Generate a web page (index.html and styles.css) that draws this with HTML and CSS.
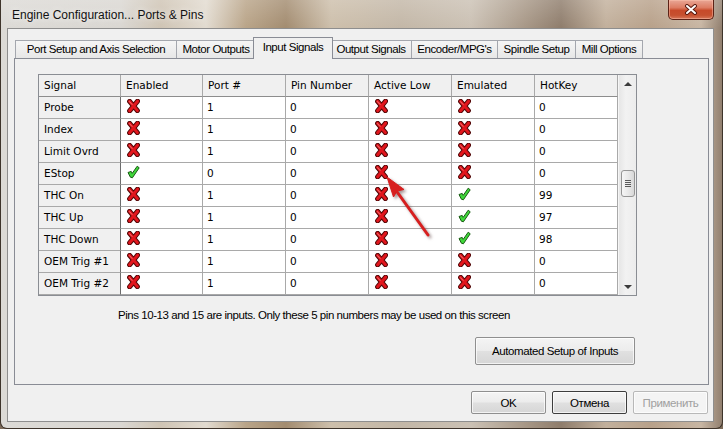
FILE: index.html
```html
<!DOCTYPE html>
<html>
<head>
<meta charset="utf-8">
<title>Engine Configuration... Ports &amp; Pins</title>
<link rel="stylesheet" href="styles.css">
</head>
<body>
<svg class="defs" width="0" height="0" aria-hidden="true">
  <defs>
    <symbol id="ico-x" viewBox="0 0 13 14">
      <path d="M2.6 2.4 L10.4 11.6 M10.6 2.2 L2.6 11.8" stroke="#520808" stroke-width="5" stroke-linecap="round" fill="none"/>
      <path d="M2.6 2.4 L10.4 11.6 M10.6 2.2 L2.6 11.8" stroke="#e2161d" stroke-width="3" stroke-linecap="round" fill="none"/>
      <path d="M2.4 2.6 L5 5.4" stroke="#f57a7a" stroke-width="1" stroke-linecap="round" fill="none"/>
    </symbol>
    <symbol id="ico-ok" viewBox="0 0 13 14">
      <path d="M1 7.5 L4.2 6.4 L5.2 8.4 L10.2 1.2 L12.2 2.8 L5.4 12.8 L3.4 12.2 Z" fill="#3fd83a" stroke="#185a12" stroke-width="1" stroke-linejoin="round"/>
    </symbol>
  </defs>
</svg>

<div class="window">
  <div class="titlebar">
    <span class="title">Engine Configuration... Ports &amp; Pins</span>
    <div class="close-btn">
      <svg width="14" height="11" viewBox="0 0 14 11"><path d="M3 2 L11 9 M11 2 L3 9" stroke="#5a1a10" stroke-width="4" stroke-linecap="round"/><path d="M3 2 L11 9 M11 2 L3 9" stroke="#ffffff" stroke-width="2" stroke-linecap="round"/></svg>
    </div>
  </div>

  <div class="client">
    <div class="tabs">
      <div class="tab tab-port">Port Setup and Axis Selection</div>
      <div class="tab tab-motor">Motor Outputs</div>
      <div class="tab tab-input active">Input Signals</div>
      <div class="tab tab-output">Output Signals</div>
      <div class="tab tab-enc">Encoder/MPG's</div>
      <div class="tab tab-spindle">Spindle Setup</div>
      <div class="tab tab-mill">Mill Options</div>
    </div>

    <div class="panel">
      <div class="grid-wrap">
        <div class="grid">
          <div class="cell head">Signal</div><div class="cell head">Enabled</div><div class="cell head">Port #</div><div class="cell head">Pin Number</div><div class="cell head">Active Low</div><div class="cell head">Emulated</div><div class="cell head">HotKey</div>

          <div class="cell rowhead">Probe</div><div class="cell icon"><svg class="ico"><use href="#ico-x"/></svg></div><div class="cell">1</div><div class="cell">0</div><div class="cell icon"><svg class="ico"><use href="#ico-x"/></svg></div><div class="cell icon"><svg class="ico"><use href="#ico-x"/></svg></div><div class="cell">0</div>

          <div class="cell rowhead">Index</div><div class="cell icon"><svg class="ico"><use href="#ico-x"/></svg></div><div class="cell">1</div><div class="cell">0</div><div class="cell icon"><svg class="ico"><use href="#ico-x"/></svg></div><div class="cell icon"><svg class="ico"><use href="#ico-x"/></svg></div><div class="cell">0</div>

          <div class="cell rowhead">Limit Ovrd</div><div class="cell icon"><svg class="ico"><use href="#ico-x"/></svg></div><div class="cell">1</div><div class="cell">0</div><div class="cell icon"><svg class="ico"><use href="#ico-x"/></svg></div><div class="cell icon"><svg class="ico"><use href="#ico-x"/></svg></div><div class="cell">0</div>

          <div class="cell rowhead">EStop</div><div class="cell icon"><svg class="ico"><use href="#ico-ok"/></svg></div><div class="cell">0</div><div class="cell">0</div><div class="cell icon"><svg class="ico"><use href="#ico-x"/></svg></div><div class="cell icon"><svg class="ico"><use href="#ico-x"/></svg></div><div class="cell">0</div>

          <div class="cell rowhead">THC On</div><div class="cell icon"><svg class="ico"><use href="#ico-x"/></svg></div><div class="cell">1</div><div class="cell">0</div><div class="cell icon"><svg class="ico"><use href="#ico-x"/></svg></div><div class="cell icon"><svg class="ico"><use href="#ico-ok"/></svg></div><div class="cell">99</div>

          <div class="cell rowhead">THC Up</div><div class="cell icon"><svg class="ico"><use href="#ico-x"/></svg></div><div class="cell">1</div><div class="cell">0</div><div class="cell icon"><svg class="ico"><use href="#ico-x"/></svg></div><div class="cell icon"><svg class="ico"><use href="#ico-ok"/></svg></div><div class="cell">97</div>

          <div class="cell rowhead">THC Down</div><div class="cell icon"><svg class="ico"><use href="#ico-x"/></svg></div><div class="cell">1</div><div class="cell">0</div><div class="cell icon"><svg class="ico"><use href="#ico-x"/></svg></div><div class="cell icon"><svg class="ico"><use href="#ico-ok"/></svg></div><div class="cell">98</div>

          <div class="cell rowhead">OEM Trig #1</div><div class="cell icon"><svg class="ico"><use href="#ico-x"/></svg></div><div class="cell">1</div><div class="cell">0</div><div class="cell icon"><svg class="ico"><use href="#ico-x"/></svg></div><div class="cell icon"><svg class="ico"><use href="#ico-x"/></svg></div><div class="cell">0</div>

          <div class="cell rowhead">OEM Trig #2</div><div class="cell icon"><svg class="ico"><use href="#ico-x"/></svg></div><div class="cell">1</div><div class="cell">0</div><div class="cell icon"><svg class="ico"><use href="#ico-x"/></svg></div><div class="cell icon"><svg class="ico"><use href="#ico-x"/></svg></div><div class="cell">0</div>
        </div>

        <div class="vscroll">
          <div class="sb-btn"><span class="tri-up"></span></div>
          <div class="sb-track">
            <div class="sb-thumb"><span class="grip"></span><span class="grip"></span><span class="grip"></span><span class="grip"></span></div>
          </div>
          <div class="sb-btn"><span class="tri-down"></span></div>
        </div>

        <svg class="arrow" width="597" height="220" viewBox="0 0 597 220">
          <path d="M389 160 L356 114" stroke="#d71f1f" stroke-width="3" stroke-linecap="round" fill="none"/>
          <path d="M348 102 L365 114.5 L358 116 L354.5 122 Z" fill="#d71f1f" stroke="#d71f1f" stroke-width="1" stroke-linejoin="round"/>
        </svg>
      </div>

      <p class="note">Pins 10-13 and 15 are inputs. Only these 5 pin numbers may be used on this screen</p>

      <div class="auto-row">
        <button class="btn btn-auto">Automated Setup of Inputs</button>
      </div>
    </div>

    <div class="buttons">
      <button class="btn">OK</button>
      <button class="btn btn-default">Отмена</button>
      <button class="btn btn-disabled">Применить</button>
    </div>
  </div>
</div>
</body>
</html>
```

FILE: styles.css
```css
* { box-sizing: border-box; }

html, body {
  margin: 0;
  padding: 0;
}

body {
  width: 723px;
  height: 429px;
  overflow: hidden;
  background: #7d6b5a;
  font-family: "Liberation Sans", Arial, sans-serif;
}

.defs {
  position: absolute;
  width: 0;
  height: 0;
  overflow: hidden;
}

/* ---------- window frame ---------- */
.window {
  width: 723px;
  height: 429px;
  display: flex;
  flex-direction: column;
  padding: 0 8px 6px 6px;
  border-left: 1px solid #3e342b;
  border-right: 1px solid #3e342b;
  border-bottom: 1px solid #3e342b;
  border-radius: 0 0 7px 7px;
  background:
    linear-gradient(180deg, rgba(255,255,255,0.18) 0px, rgba(255,255,255,0) 28px),
    linear-gradient(90deg,
      #dcdad6 0px, #dad7d2 120px, #cfc4b4 160px, #e2dbd0 205px,
      #b9a488 245px, #a38c70 285px, #cdbfab 330px, #c3b7a7 400px,
      #cbc1b4 470px, #a79786 525px, #8f7d6c 560px, #c2b09c 605px,
      #b8a18a 650px, #c8b6a3 700px, #8c7a6a 723px);
}

.titlebar {
  height: 28px;
  flex: none;
  display: flex;
  align-items: flex-start;
  justify-content: space-between;
  padding-left: 5px;
}

.title {
  font-family: "Liberation Sans", Arial, sans-serif;
  font-size: 12px;
  line-height: 14px;
  margin-top: 8px;
  color: #111;
  text-shadow: 0 0 6px rgba(255,255,255,0.9);
}

.close-btn {
  width: 46px;
  height: 20px;
  display: flex;
  align-items: center;
  justify-content: center;
  border: 1px solid #5c2216;
  border-top: none;
  border-radius: 0 0 5px 5px;
  background: linear-gradient(180deg, #e9a796 0%, #dd7c63 40%, #c74a2a 55%, #c6502f 80%, #d7785a 100%);
  box-shadow: inset 0 0 0 1px rgba(255,200,180,0.45);
}

/* ---------- client area ---------- */
.client {
  flex: 1;
  display: flex;
  flex-direction: column;
  background: #f0f0f0;
  border: 1px solid #8e8e8e;
}

.tabs {
  height: 30px;
  flex: none;
  display: flex;
  align-items: flex-end;
  padding: 8px 0 0 7px;
}

.tab {
  height: 19px;
  margin-left: -1px;
  border: 1px solid #a4a7ae;
  border-bottom: none;
  background: linear-gradient(180deg, #f5f5f5 0%, #eeeeee 50%, #e6e6e6 100%);
  font-family: "Liberation Sans", Arial, sans-serif;
  font-size: 11.5px;
  letter-spacing: -0.45px;
  line-height: 17px;
  color: #000;
  text-align: center;
  white-space: nowrap;
}

.tab-port { width: 162px; margin-left: 0; }
.tab-motor { width: 80px; }
.tab-input { width: 80px; }
.tab-output { width: 82px; margin-left: -3px; }
.tab-enc { width: 87px; }
.tab-spindle { width: 79px; }
.tab-mill { width: 68px; }

.tab.active {
  height: 22px;
  margin-left: -3px;
  position: relative;
  z-index: 1;
  background: #f0f0f0;
  border-color: #898c95;
  line-height: 19px;
}

.panel {
  margin: -1px 0 0 6px;
  width: 695px;
  height: 327px;
  flex: none;
  border: 1px solid #898c95;
  background: #f0f0f0;
  display: flex;
  flex-direction: column;
}

/* ---------- data grid ---------- */
.grid-wrap {
  position: relative;
  margin: 15px 0 0 23px;
  width: 599px;
  height: 222px;
  display: flex;
  border: 1px solid #8a8d93;
  background: #f0f0f0;
}

.grid {
  width: 579px;
  display: grid;
  grid-template-columns: 82px 82px 83px 83px 83px 83px 83px;
  grid-auto-rows: 22px;
  align-content: start;
}

.cell {
  border-right: 1px solid #a9a9a9;
  border-bottom: 1px solid #a9a9a9;
  padding-left: 4px;
  background: #ffffff;
  font-family: "DejaVu Sans", Verdana, sans-serif;
  font-size: 10.5px;
  line-height: 21px;
  color: #000;
  white-space: nowrap;
  overflow: hidden;
}

.cell.head {
  background: #f0f0f0;
  border-bottom-color: #8d8d8d;
  padding-left: 5px;
}

.cell.rowhead {
  background: #f0f0f0;
  border-right-color: #6c6c6c;
  padding-left: 5px;
}

.cell.icon {
  padding: 2px 0 0 6px;
  line-height: 0;
}

.ico {
  width: 13px;
  height: 14px;
}

/* ---------- scrollbar ---------- */
.vscroll {
  width: 18px;
  display: flex;
  flex-direction: column;
  background: linear-gradient(90deg, #e6e6e6, #f2f2f2 40%, #ececec);
  border-left: 1px solid #f6f6f6;
}

.sb-btn {
  height: 17px;
  flex: none;
  display: flex;
  align-items: center;
  justify-content: center;
}

.tri-up {
  width: 0;
  height: 0;
  border-left: 4px solid transparent;
  border-right: 4px solid transparent;
  border-bottom: 4px solid #3c3c3c;
}

.tri-down {
  width: 0;
  height: 0;
  border-left: 4px solid transparent;
  border-right: 4px solid transparent;
  border-top: 4px solid #3c3c3c;
}

.sb-track {
  flex: 1;
  padding: 78px 0 0 2px;
}

.sb-thumb {
  width: 14px;
  height: 27px;
  border: 1px solid #959595;
  border-radius: 3px;
  background: linear-gradient(90deg, #f6f6f6 0%, #e9e9e9 50%, #d8d8d8 100%);
  display: flex;
  flex-direction: column;
  align-items: center;
  justify-content: center;
  gap: 1px;
}

.grip {
  width: 6px;
  height: 1px;
  background: #5a5a5a;
}

.arrow {
  position: absolute;
  left: 0;
  top: 0;
  overflow: visible;
  pointer-events: none;
  filter: drop-shadow(2px 2px 1.5px rgba(90, 60, 60, 0.55));
}

/* ---------- note + buttons ---------- */
.note {
  margin: 11px 0 0 0;
  padding-left: 103px;
  font-family: "Liberation Sans", Arial, sans-serif;
  font-size: 11.5px;
  letter-spacing: -0.45px;
  line-height: 16px;
  color: #000;
}

.auto-row {
  display: flex;
  justify-content: flex-end;
  padding-right: 73px;
  margin-top: 14px;
}

.btn {
  height: 23px;
  width: 75px;
  padding: 0;
  border: 1px solid #8f8f8f;
  border-radius: 2px;
  background: linear-gradient(180deg, #f4f4f4 0%, #ececec 48%, #e0e0e0 52%, #d6d6d6 100%);
  font-family: "Liberation Sans", Arial, sans-serif;
  font-size: 11.5px;
  letter-spacing: -0.4px;
  color: #000;
  box-shadow: inset 0 0 0 1px rgba(255,255,255,0.7);
}

.btn-auto {
  width: 160px;
  height: 28px;
}

.btn-default {
  border-color: #3d3d3d;
}

.btn-disabled {
  color: #a0a0a0;
  border-color: #b8b8b8;
  background: #f4f4f4;
}

.buttons {
  display: flex;
  justify-content: flex-end;
  gap: 6px;
  padding-right: 5px;
  margin-top: 6px;
}
```
